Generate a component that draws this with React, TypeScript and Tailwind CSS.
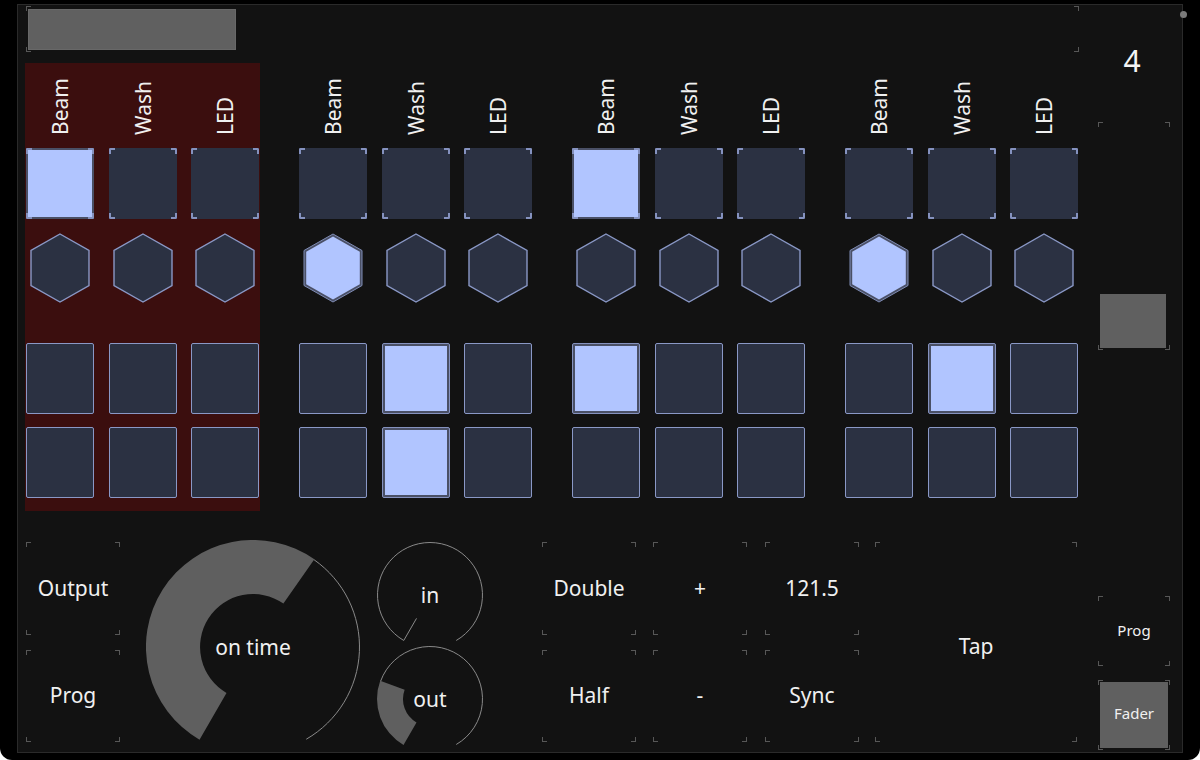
import React from "react";

const FONT = { fontFamily: '"Noto Sans", "Open Sans", sans-serif' };

function Corners({ blue = false }: { blue?: boolean }) {
  if (blue) {
    return (
      <>
        <span className="absolute left-0 top-0 w-[6px] h-[6px] border-l-2 border-t-2 border-[#8592bf] rounded-tl-[2px]" />
        <span className="absolute right-0 top-0 w-[6px] h-[6px] border-r-2 border-t-2 border-[#8592bf] rounded-tr-[2px]" />
        <span className="absolute left-0 bottom-0 w-[6px] h-[6px] border-l-2 border-b-2 border-[#8592bf] rounded-bl-[2px]" />
        <span className="absolute right-0 bottom-0 w-[6px] h-[6px] border-r-2 border-b-2 border-[#8592bf] rounded-br-[2px]" />
      </>
    );
  }
  return (
    <>
      <span className="absolute left-0 top-0 w-[5px] h-[5px] border-l border-t border-[#575757]" />
      <span className="absolute right-0 top-0 w-[5px] h-[5px] border-r border-t border-[#575757]" />
      <span className="absolute left-0 bottom-0 w-[5px] h-[5px] border-l border-b border-[#575757]" />
      <span className="absolute right-0 bottom-0 w-[5px] h-[5px] border-r border-b border-[#575757]" />
    </>
  );
}

function TopSquare({ lit }: { lit: boolean }) {
  return (
    <div className="relative w-[68px] h-[71px]">
      {lit ? (
        <div className="w-full h-full bg-[#4a5066] p-[2px]">
          <div className="w-full h-full bg-[#b1c5ff]" />
        </div>
      ) : (
        <div className="w-full h-full bg-[#2b3142]" />
      )}
      <Corners blue />
    </div>
  );
}

function Square({ lit }: { lit: boolean }) {
  if (lit) {
    return (
      <div className="w-[68px] h-[71px] border border-[#8592bf] bg-[#4a5066] p-[2px] rounded-[2px]">
        <div className="w-full h-full bg-[#b1c5ff]" />
      </div>
    );
  }
  return <div className="w-[68px] h-[71px] border-[1.5px] border-[#8a98c6] bg-[#2b3142] rounded-[2px]" />;
}

function Hex({ lit }: { lit: boolean }) {
  return (
    <svg width="60" height="70" viewBox="0 0 60 70">
      {lit ? (
        <>
          <polygon points="30,1 59,17.5 59,52.5 30,69 1,52.5 1,17.5" fill="#4a5066" stroke="#7f8cb5" strokeWidth="1" />
          <polygon points="30,3.4 56.8,18.7 56.8,51.3 30,66.6 3.2,51.3 3.2,18.7" fill="#b1c5ff" />
        </>
      ) : (
        <polygon points="30,1 59,17.5 59,52.5 30,69 1,52.5 1,17.5" fill="#2b3142" stroke="#8a98c6" strokeWidth="1.4" />
      )}
    </svg>
  );
}

type Group = { red?: boolean; r1: number[]; hex: number[]; r3: number[]; r4: number[] };

const groups: Group[] = [
  { red: true, r1: [1, 0, 0], hex: [0, 0, 0], r3: [0, 0, 0], r4: [0, 0, 0] },
  { r1: [0, 0, 0], hex: [1, 0, 0], r3: [0, 1, 0], r4: [0, 1, 0] },
  { r1: [1, 0, 0], hex: [0, 0, 0], r3: [1, 0, 0], r4: [0, 0, 0] },
  { r1: [0, 0, 0], hex: [1, 0, 0], r3: [0, 1, 0], r4: [0, 0, 0] },
];

const labels = ["Beam", "Wash", "LED"];

function GroupBlock({ g }: { g: Group }) {
  return (
    <div className={`w-[235px] h-[448px] px-[1px] flex flex-col ${g.red ? "bg-[#3b0e0e]" : ""}`}>
      <div className="grid grid-cols-[68px_68px_68px] gap-x-[14.5px] h-[85px]">
        {labels.map((l) => (
          <div key={l} className="flex justify-center items-end pb-[13px]">
            <span className="[writing-mode:vertical-rl] rotate-180 text-[21px] leading-[24px] text-[#f0f0f0]">{l}</span>
          </div>
        ))}
      </div>
      <div className="grid grid-cols-[68px_68px_68px] gap-x-[14.5px]">
        {g.r1.map((v, i) => (
          <TopSquare key={i} lit={!!v} />
        ))}
      </div>
      <div className="grid grid-cols-[68px_68px_68px] gap-x-[14.5px] mt-[14px]">
        {g.hex.map((v, i) => (
          <div key={i} className="flex justify-center">
            <Hex lit={!!v} />
          </div>
        ))}
      </div>
      <div className="grid grid-cols-[68px_68px_68px] gap-x-[14.5px] mt-[40px]">
        {g.r3.map((v, i) => (
          <Square key={i} lit={!!v} />
        ))}
      </div>
      <div className="grid grid-cols-[68px_68px_68px] gap-x-[14.5px] mt-[13px]">
        {g.r4.map((v, i) => (
          <Square key={i} lit={!!v} />
        ))}
      </div>
    </div>
  );
}

function pt(cx: number, cy: number, r: number, deg: number) {
  const a = (deg * Math.PI) / 180;
  return `${(cx + r * Math.cos(a)).toFixed(2)} ${(cy + r * Math.sin(a)).toFixed(2)}`;
}

function sector(cx: number, cy: number, ri: number, ro: number, a0: number, a1: number) {
  const large = a1 - a0 > 180 ? 1 : 0;
  return `M ${pt(cx, cy, ro, a0)} A ${ro} ${ro} 0 ${large} 1 ${pt(cx, cy, ro, a1)} L ${pt(cx, cy, ri, a1)} A ${ri} ${ri} 0 ${large} 0 ${pt(cx, cy, ri, a0)} Z`;
}

function arc(cx: number, cy: number, r: number, a0: number, a1: number) {
  const large = a1 - a0 > 180 ? 1 : 0;
  return `M ${pt(cx, cy, r, a0)} A ${r} ${r} 0 ${large} 1 ${pt(cx, cy, r, a1)}`;
}

function Knob({ size, ri, end, label }: { size: number; ri: number; end: number; label: string }) {
  const c = size / 2;
  const ro = c - 0.5;
  const rad = (120 * Math.PI) / 180;
  return (
    <div className="grid place-items-center" style={{ width: size, height: size }}>
      <svg width={size} height={size} className="[grid-area:1/1]">
        {end > 120 ? (
          <path d={sector(c, c, ri, c, 120, end)} fill="#5f5f5f" />
        ) : (
          <line
            x1={c + ri * Math.cos(rad)}
            y1={c + ri * Math.sin(rad)}
            x2={c + ro * Math.cos(rad)}
            y2={c + ro * Math.sin(rad)}
            stroke="#8a8a8a"
            strokeWidth="1"
          />
        )}
        <path d={arc(c, c, ro, end, 420)} fill="none" stroke="#8a8a8a" strokeWidth="1" />
      </svg>
      <span className="[grid-area:1/1] text-[21px] leading-none text-[#f0f0f0]">{label}</span>
    </div>
  );
}

function Btn({ label, h }: { label: string; h: string }) {
  return (
    <div className={`relative w-[94px] ${h} flex items-center justify-center text-[21px] text-[#f0f0f0]`}>
      <Corners />
      <span>{label}</span>
    </div>
  );
}

function BtnCol({ top, bottom, ml }: { top: string; bottom: string; ml: string }) {
  return (
    <div className={`flex flex-col pt-[2px] gap-[15px] ${ml}`}>
      <Btn label={top} h="h-[93px]" />
      <Btn label={bottom} h="h-[92px]" />
    </div>
  );
}

export default function App() {
  return (
    <div className="w-[1200px] h-[760px] bg-white overflow-hidden" style={FONT}>
      <div className="relative w-[1200px] h-[760px] bg-black rounded-b-[12px] pt-[4px] pl-[17px]">
        <div className="w-[1166px] h-[749px] bg-[#121212] border border-[#2a2a2a] pl-[7px] flex">
          {/* left main */}
          <div className="w-[1053px] flex flex-col">
            <div className="relative ml-[1px] mt-[1px] h-[46px] w-[1053px]">
              <Corners />
              <div className="ml-[2px] mt-[3px] w-[208px] h-[41px] bg-[#606060] border border-[#686868]" />
            </div>
            <div className="mt-[11px] flex gap-[38px]">
              {groups.map((g, i) => (
                <GroupBlock key={i} g={g} />
              ))}
            </div>
            <div className="mt-[29px] h-[212px] flex items-start">
              <div className="ml-[1px]">
                <BtnCol top="Output" bottom="Prog" ml="" />
              </div>
              <div className="ml-[26px]">
                <Knob size={214} ri={53} end={305} label="on time" />
              </div>
              <div className="ml-[17px] pt-[2px] flex flex-col">
                <Knob size={106} ri={27} end={120} label="in" />
                <div className="-mt-[2px]">
                  <Knob size={106} ri={27} end={200} label="out" />
                </div>
              </div>
              <BtnCol top="Double" bottom="Half" ml="ml-[59px]" />
              <BtnCol top="+" bottom="-" ml="ml-[17px]" />
              <BtnCol top="121.5" bottom="Sync" ml="ml-[18px]" />
              <div className="relative ml-[16px] mt-[2px] w-[202px] h-[200px] flex items-center justify-center pt-[10px] text-[21px] text-[#f0f0f0]">
                <Corners />
                <span>Tap</span>
              </div>
            </div>
          </div>
          {/* right column */}
          <div className="ml-[20px] w-[72px] flex flex-col">
            <div className="h-[117px] flex justify-center pt-[41px] pr-[4px]">
              <span className="text-[30px] leading-[30px] text-[#f4f4f4]">4</span>
            </div>
            <div className="relative h-[228px] flex flex-col justify-end pl-[2px] pr-[4px] pb-[2px]">
              <Corners />
              <div className="h-[54px] bg-[#606060]" />
            </div>
            <div className="relative mt-[246px] h-[70px] flex items-center justify-center pb-[2px] text-[15px] text-[#f0f0f0]">
              <Corners />
              <span>Prog</span>
            </div>
            <div className="relative mt-[14px] h-[70px] p-[2px]">
              <Corners />
              <div className="w-full h-full bg-[#606060] flex items-center justify-center pb-[4px] text-[15px] text-[#f0f0f0]">
                Fader
              </div>
            </div>
          </div>
        </div>
        <span className="absolute left-[1180px] top-[11px] w-[7px] h-[7px] rounded-full bg-[#7a7a7a]" />
      </div>
    </div>
  );
}
